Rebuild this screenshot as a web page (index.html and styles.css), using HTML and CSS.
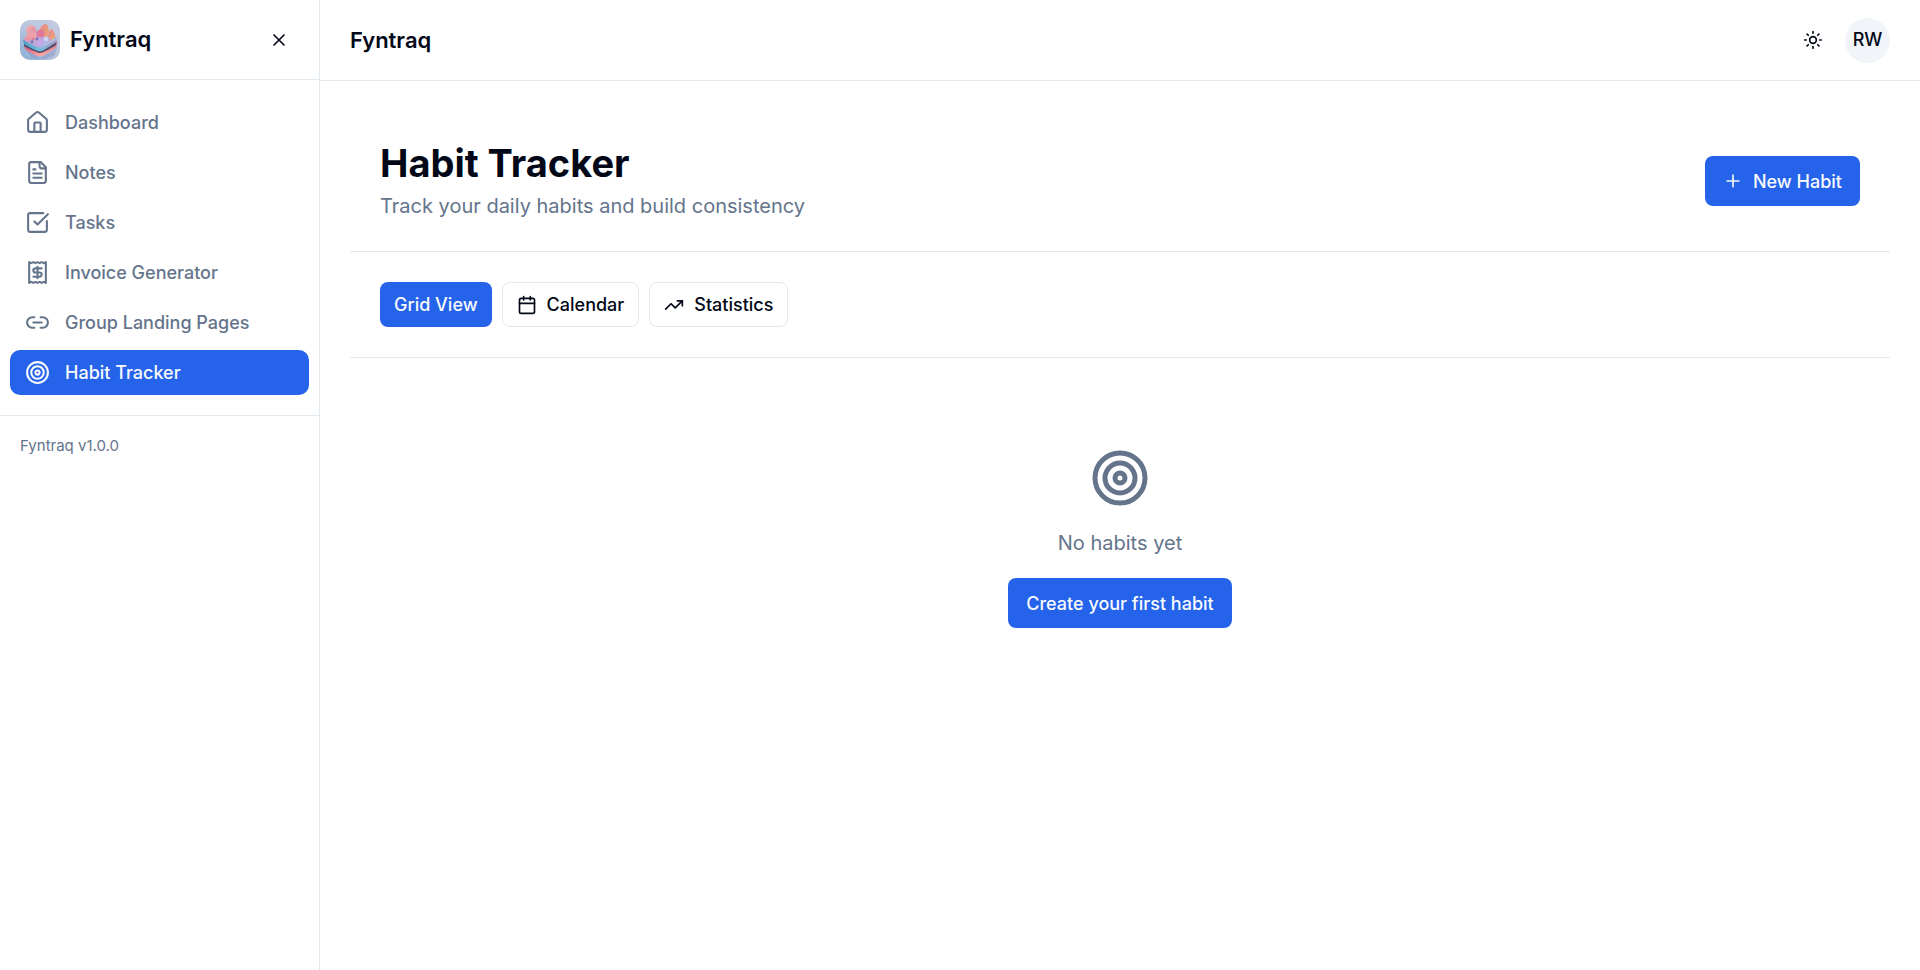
FILE: index.html
```html
<!DOCTYPE html>
<html lang="en">
<head>
<meta charset="utf-8">
<meta name="viewport" content="width=device-width, initial-scale=1">
<title>Fyntraq</title>
<link rel="stylesheet" href="styles.css">
</head>
<body>
<div class="app">
  <aside class="sidebar">
    <div class="sidebar-header">
      <svg class="logo" viewBox="0 0 40 40" aria-hidden="true">
        <defs>
          <linearGradient id="bg" x1="0" y1="1" x2="1" y2="0"><stop offset="0" stop-color="#86aed2"/><stop offset=".5" stop-color="#b9c6e0"/><stop offset="1" stop-color="#c5cbe3"/></linearGradient>
          <linearGradient id="side" x1="0" y1="0" x2="1" y2="0"><stop offset="0" stop-color="#4f9fcb"/><stop offset=".5" stop-color="#74bedb"/><stop offset="1" stop-color="#b391c4"/></linearGradient>
          <linearGradient id="base" x1="0" y1="0" x2="1" y2="0"><stop offset="0" stop-color="#d85f80"/><stop offset=".5" stop-color="#ffa59f"/><stop offset="1" stop-color="#dd8192"/></linearGradient>
          <linearGradient id="top" x1="0" y1="0" x2="1" y2="0"><stop offset="0" stop-color="#e094b4"/><stop offset=".5" stop-color="#b5aee0"/><stop offset="1" stop-color="#a4c7e2"/></linearGradient>
          <linearGradient id="peach" x1="0" y1="0" x2="1" y2="1"><stop offset="0" stop-color="#f3bcb8"/><stop offset="1" stop-color="#e07a94"/></linearGradient>
          <linearGradient id="amber" x1="0" y1="0" x2="1" y2="1"><stop offset="0" stop-color="#e5888d"/><stop offset="1" stop-color="#f0a573"/></linearGradient>
          <filter id="soft"><feGaussianBlur stdDeviation=".4"/></filter>
        </defs>
        <rect width="40" height="40" fill="url(#bg)"/>
        <g filter="url(#soft)">
          <path d="M6 30 L20 38 L37 28 L34 36 L24 39 L12 38Z" fill="#8792bf" opacity=".5"/>
          <path d="M4 25 L5 29 Q6 31 18 36 Q21 37 24 35 L36 28 Q37 27 37 23Z" fill="url(#base)"/>
          <path d="M4 22 L4 26 Q12 31 19 33 Q22 34 36 25 L37 21Z" fill="#4d4c6b"/>
          <path d="M3 20 L4 24 Q12 29 18 31 Q21 32 24 30 L37 22 L36 17Z" fill="url(#side)"/>
          <path d="M6 16 L20 10 L35 17 Q37 20 34 21 L23 27 Q20 28 17 27 L5 21 Q3 19 6 16Z" fill="url(#top)"/>
          <ellipse cx="11" cy="10" rx="5" ry="5" fill="url(#peach)"/>
          <path d="M6 18 Q7 11 12 10 Q17 12 17 18 L11 20Z" fill="#eba0aa"/>
          <path d="M20 9 Q22 4 26 4 Q29 6 29 12 L27 17 L20 16Z" fill="url(#amber)"/>
          <path d="M28 17 Q29 9 32 9 Q36 14 35 18 L31 20Z" fill="url(#amber)"/>
          <ellipse cx="20.500" cy="13.500" rx="4" ry="4" fill="#e0789a"/>
          <circle cx="8" cy="18" r="2" fill="#f0959f"/><circle cx="13" cy="19" r="1.600" fill="#dc7798"/>
          <circle cx="12" cy="22" r="1.400" fill="#5a7cc8"/><circle cx="17" cy="19" r="1.400" fill="#7570bd"/>
          <circle cx="26" cy="19" r="2" fill="#d5d9f7"/><circle cx="22" cy="20" r="1.500" fill="#d49fd8"/>
          <ellipse cx="19.500" cy="23" rx="3" ry="2" fill="#c4a6ec"/><circle cx="30" cy="20" r="1.200" fill="#dd98ba"/>
        </g>
      </svg>
      <span class="brand">Fyntraq</span>
      <button class="icon-button close" type="button" aria-label="Close sidebar">
        <svg class="icon" viewBox="0 0 24 24"><path d="M18 6 6 18M6 6l12 12"/></svg>
      </button>
    </div>
    <nav class="nav">
      <a class="nav-item" href="#"><svg class="icon icon-md" viewBox="0 0 24 24"><path d="M15 21v-8a1 1 0 0 0-1-1h-4a1 1 0 0 0-1 1v8"/><path d="M3 10a2 2 0 0 1 .709-1.528l7-5.999a2 2 0 0 1 2.582 0l7 5.999A2 2 0 0 1 21 10v9a2 2 0 0 1-2 2H5a2 2 0 0 1-2-2z"/></svg>Dashboard</a>
      <a class="nav-item" href="#"><svg class="icon icon-md" viewBox="0 0 24 24"><path d="M15 2H6a2 2 0 0 0-2 2v16a2 2 0 0 0 2 2h12a2 2 0 0 0 2-2V7Z"/><path d="M14 2v4a2 2 0 0 0 2 2h4M10 9H8M16 13H8M16 17H8"/></svg>Notes</a>
      <a class="nav-item" href="#"><svg class="icon icon-md" viewBox="0 0 24 24"><path d="M21 10.5V19a2 2 0 0 1-2 2H5a2 2 0 0 1-2-2V5a2 2 0 0 1 2-2h12.5"/><path d="m9 11 3 3L22 4"/></svg>Tasks</a>
      <a class="nav-item" href="#"><svg class="icon icon-md" viewBox="0 0 24 24"><path d="M4 2v20l2-1 2 1 2-1 2 1 2-1 2 1 2-1 2 1V2l-2 1-2-1-2 1-2-1-2 1-2-1-2 1Z"/><path d="M16 8h-6a2 2 0 1 0 0 4h4a2 2 0 1 1 0 4H8M12 17.5v-11"/></svg>Invoice Generator</a>
      <a class="nav-item" href="#"><svg class="icon icon-md" viewBox="0 0 24 24"><path d="M9 17H7A5 5 0 0 1 7 7h2M15 7h2a5 5 0 1 1 0 10h-2M8 12h8"/></svg>Group Landing Pages</a>
      <a class="nav-item active" href="#" aria-current="page"><svg class="icon icon-md" viewBox="0 0 24 24"><circle cx="12" cy="12" r="10"/><circle cx="12" cy="12" r="6"/><circle cx="12" cy="12" r="2"/></svg>Habit Tracker</a>
    </nav>
    <div class="sidebar-footer">Fyntraq v1.0.0</div>
  </aside>
  <div class="content">
    <header class="topbar">
      <span class="brand">Fyntraq</span>
      <div class="topbar-actions">
        <button class="icon-button" type="button" aria-label="Toggle theme">
          <svg class="icon" viewBox="0 0 24 24"><circle cx="12" cy="12" r="4"/><path d="M12 2v2M12 20v2M4.93 4.93l1.41 1.41M17.66 17.66l1.41 1.41M2 12h2M20 12h2M6.34 17.66l-1.41 1.41M19.07 4.93l-1.41 1.41"/></svg>
        </button>
        <button class="avatar" type="button">RW</button>
      </div>
    </header>
    <main class="page">
      <section class="page-header">
        <div class="heading">
          <h1 class="title">Habit Tracker</h1>
          <p class="subtitle">Track your daily habits and build consistency</p>
        </div>
        <button class="button primary large" type="button"><svg class="icon" viewBox="0 0 24 24"><path d="M5 12h14M12 5v14"/></svg>New Habit</button>
      </section>
      <section class="views">
        <button class="button primary" type="button">Grid View</button>
        <button class="button outline" type="button"><svg class="icon" viewBox="0 0 24 24"><path d="M8 2v4M16 2v4"/><rect width="18" height="18" x="3" y="4" rx="2"/><path d="M3 10h18"/></svg>Calendar</button>
        <button class="button outline" type="button"><svg class="icon" viewBox="0 0 24 24"><path d="M22 7 13.5 15.5 8.5 10.5 2 17"/><path d="M16 7h6v6"/></svg>Statistics</button>
      </section>
      <section class="empty">
        <svg class="icon icon-xl" viewBox="0 0 24 24"><circle cx="12" cy="12" r="10"/><circle cx="12" cy="12" r="6"/><circle cx="12" cy="12" r="2"/></svg>
        <p class="empty-text">No habits yet</p>
        <button class="button primary large" type="button">Create your first habit</button>
      </section>
    </main>
  </div>
</div>
</body>
</html>
```
FILE: styles.css
```css
:root {
  --foreground: #020817;
  --muted: #64748b;
  --border: #e2e8f0;
  --primary: #2563eb;
  --primary-text: #f8fafc;
}

* { box-sizing: border-box; }

body {
  margin: 0;
  font-family: Inter, "Liberation Sans", sans-serif;
  font-size: 20px;
  line-height: 30px;
  color: var(--foreground);
  background: #fff;
}

button { font: inherit; color: inherit; cursor: pointer; }

.app { display: flex; min-height: 100vh; }

.icon {
  flex: none;
  width: 20px;
  height: 20px;
  fill: none;
  stroke: currentColor;
  stroke-width: 2;
  stroke-linecap: round;
  stroke-linejoin: round;
}
.icon-md { width: 25px; height: 25px; }
.icon-xl { width: 60px; height: 60px; }

.sidebar {
  flex: none;
  width: 320px;
  border-right: 1px solid var(--border);
}
.sidebar-header {
  display: flex;
  align-items: center;
  gap: 10px;
  height: 80px;
  padding: 0 20px;
  border-bottom: 1px solid var(--border);
}
.logo { width: 40px; height: 40px; border-radius: 10px; }
.brand { font-size: 22px; font-weight: 600; line-height: 35px; }

.icon-button {
  display: flex;
  align-items: center;
  justify-content: center;
  width: 45px;
  height: 45px;
  padding: 0;
  border: 0;
  border-radius: 8px;
  background: none;
}
.close { width: 40px; height: 40px; margin-left: auto; }

.nav {
  display: flex;
  flex-direction: column;
  gap: 5px;
  padding: 20px 10px;
}
.nav-item {
  display: flex;
  align-items: center;
  gap: 15px;
  padding: 10px 15px;
  border-radius: 10px;
  font-size: 18px;
  font-weight: 500;
  line-height: 25px;
  color: var(--muted);
  text-decoration: none;
}
.nav-item.active { background: var(--primary); color: var(--primary-text); }

.sidebar-footer {
  padding: 20px;
  border-top: 1px solid var(--border);
  font-size: 15px;
  line-height: 20px;
  color: var(--muted);
}

.content { flex: 1; min-width: 0; }
.topbar {
  display: flex;
  align-items: center;
  justify-content: space-between;
  height: 81px;
  padding: 0 30px;
  border-bottom: 1px solid var(--border);
}
.topbar-actions { display: flex; align-items: center; gap: 10px; }
.avatar {
  width: 45px;
  height: 45px;
  padding: 0;
  border: 0;
  border-radius: 50%;
  background: #f1f5f9;
  font-size: 18px;
  font-weight: 500;
}

.page { padding: 30px; }
.page-header {
  display: flex;
  align-items: center;
  justify-content: space-between;
  padding: 30px;
  border-bottom: 1px solid var(--border);
}
.heading { display: flex; flex-direction: column; gap: 5px; }
.title { margin: 0; font-size: 38px; font-weight: 700; line-height: 45px; }
.subtitle, .empty-text { margin: 0; color: var(--muted); }

.button {
  display: flex;
  align-items: center;
  justify-content: center;
  gap: 10px;
  height: 45px;
  padding: 0 14px;
  border: 0;
  border-radius: 8px;
  font-size: 18px;
  font-weight: 500;
  line-height: 25px;
}
.primary { background: var(--primary); color: var(--primary-text); }
.outline { border: 1px solid var(--border); background: #fff; }
.large { height: 50px; padding: 0 18px; }

.views {
  display: flex;
  gap: 10px;
  padding: 30px;
  border-bottom: 1px solid var(--border);
}

.empty {
  display: flex;
  flex-direction: column;
  align-items: center;
  gap: 20px;
  padding: 90px 30px;
}
.empty .icon { color: var(--muted); }
```
